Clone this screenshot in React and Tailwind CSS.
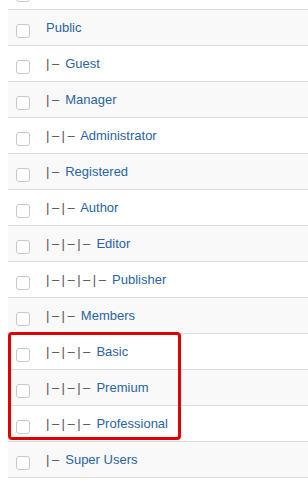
import React from "react";

const rows = [
  { d: 0, t: "" },
  { d: 0, t: "Public" },
  { d: 1, t: "Guest" },
  { d: 1, t: "Manager" },
  { d: 2, t: "Administrator" },
  { d: 1, t: "Registered" },
  { d: 2, t: "Author" },
  { d: 3, t: "Editor" },
  { d: 4, t: "Publisher" },
  { d: 2, t: "Members" },
  { d: 3, t: "Basic" },
  { d: 3, t: "Premium" },
  { d: 3, t: "Professional" },
  { d: 1, t: "Super Users" },
];

export default function App() {
  return (
    <div
      className="w-[308px] h-[486px] overflow-hidden bg-white"
      style={{ fontFamily: '"Liberation Sans", Arial, sans-serif' }}
    >
      <div className="relative ml-2 -mt-[27px]">
        {rows.map((r, i) => (
          <div
            key={i}
            className={`flex items-center h-[36px] border-t border-[#dddddd] pl-[8px] ${
              i % 2 === 1 ? "bg-[#f9f9f9]" : "bg-white"
            }`}
          >
            <span className="mt-[6px] w-[14px] h-[14px] rounded-[3px] border border-[#c8c8c8] bg-white shrink-0" />
            <span className="ml-[16px] text-[13px] leading-none whitespace-pre">
              {r.d > 0 && (
                <>
                  <span className="text-[#555555] tracking-[2.5px]">
                    {"|–".repeat(r.d)}
                  </span>
                  <span> </span>
                </>
              )}
              <span className="text-[#2a64a3]">{r.t}</span>
            </span>
          </div>
        ))}
        <div className="border-t border-[#dddddd]" />
        <div className="absolute left-0 top-[359px] w-[173px] h-[108px] border-[3px] border-[#e00000] rounded-[4px] pointer-events-none" />
      </div>
    </div>
  );
}
